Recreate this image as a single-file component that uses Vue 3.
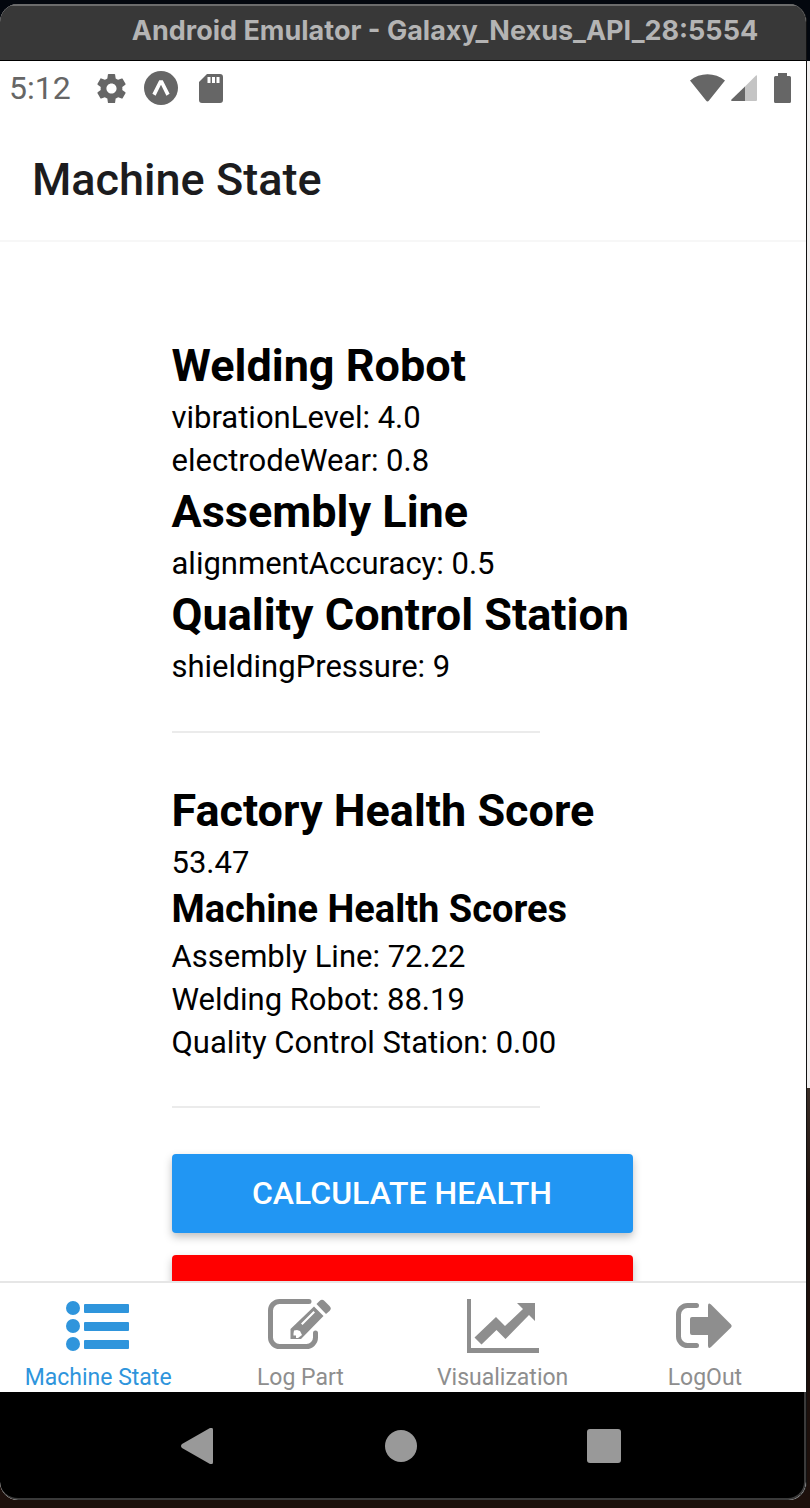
<script setup>
import { ref } from 'vue'

const machines = [
  { name: 'Welding Robot', readings: [['vibrationLevel', '4.0'], ['electrodeWear', '0.8']] },
  { name: 'Assembly Line', readings: [['alignmentAccuracy', '0.5']] },
  { name: 'Quality Control Station', readings: [['shieldingPressure', '9']] },
]

const factoryScore = '53.47'
const scores = [
  ['Assembly Line', '72.22'],
  ['Welding Robot', '88.19'],
  ['Quality Control Station', '0.00'],
]

const tabs = [
  { id: 'state', label: 'Machine State' },
  { id: 'log', label: 'Log Part' },
  { id: 'chart', label: 'Visualization' },
  { id: 'logout', label: 'LogOut' },
]
const active = ref('state')
</script>

<template>
  <div class="desktop">
    <div class="window">
      <div class="titlebar">Android Emulator - Galaxy_Nexus_API_28:5554</div>

      <div class="statusbar">
        <span class="clock">5:12</span>
        <svg class="status-icon gear" viewBox="2 2 20 20" aria-hidden="true">
          <path d="M19.43 12.98c.04-.32.07-.64.07-.98s-.03-.66-.07-.98l2.11-1.65c.19-.15.24-.42.12-.64l-2-3.46c-.12-.22-.39-.3-.61-.22l-2.49 1c-.52-.4-1.08-.73-1.69-.98l-.38-2.65C14.46 2.18 14.25 2 14 2h-4c-.25 0-.46.18-.49.42l-.38 2.65c-.61.25-1.17.59-1.69.98l-2.49-1c-.23-.09-.49 0-.61.22l-2 3.46c-.13.22-.07.49.12.64l2.11 1.65c-.04.32-.07.65-.07.98s.03.66.07.98l-2.11 1.65c-.19.15-.24.42-.12.64l2 3.46c.12.22.39.3.61.22l2.49-1c.52.4 1.08.73 1.69.98l.38 2.65c.03.24.24.42.49.42h4c.25 0 .46-.18.49-.42l.38-2.65c.61-.25 1.17-.59 1.69-.98l2.49 1c.23.09.49 0 .61-.22l2-3.46c.12-.22.07-.49-.12-.64l-2.11-1.65zM12 15.5c-1.93 0-3.5-1.57-3.5-3.5s1.57-3.5 3.500-3.5 3.500 1.57 3.500 3.500-1.57 3.500-3.500 3.500z" />
        </svg>
        <svg class="status-icon expo" viewBox="0 0 34 34" aria-hidden="true">
          <circle cx="17" cy="17" r="17" />
          <path fill="#fff" d="M15.2 9.2h3.6l6.8 13.6-3.2 1.9L17 13.8l-5.4 10.9-3.2-1.9z" />
        </svg>
        <svg class="status-icon card" viewBox="0 0 24 29" aria-hidden="true">
          <path fill-rule="evenodd" d="M8 0h13a3 3 0 0 1 3 3v23a3 3 0 0 1-3 3H3a3 3 0 0 1-3-3V8zM8.500 3v6h3V3zM13 3v6h3V3zM17.500 3v6h3V3z" />
        </svg>
        <span class="spacer"></span>
        <svg class="status-icon wifi" viewBox="0 0 35 28" aria-hidden="true">
          <path d="M0 6.500C10-2 25-2 35 6.500L19 26.500q-1.500 2-3 0z" />
        </svg>
        <svg class="status-icon signal" viewBox="0 0 26 26" aria-hidden="true">
          <path fill="#c4c4c4" d="M25 .5q1-.8 1 .5v24a1 1 0 0 1-1 1H14V11.500z" />
          <path d="M14 11.500V26H1q-1.500-.5-.5-1.500z" />
        </svg>
        <svg class="status-icon battery" viewBox="0 0 17 30" aria-hidden="true">
          <path d="M4 0h9v3h2.500A1.500 1.500 0 0 1 17 4.500v24a1.500 1.500 0 0 1-1.500 1.500h-14A1.500 1.500 0 0 1 0 28.500v-24A1.500 1.500 0 0 1 1.500 3H4z" />
        </svg>
      </div>

      <header class="appbar"><h1>Machine State</h1></header>

      <main class="scroll">
        <div class="content">
          <section v-for="m in machines" :key="m.name">
            <h2>{{ m.name }}</h2>
            <p v-for="r in m.readings" :key="r[0]">{{ r[0] }}: {{ r[1] }}</p>
          </section>
          <hr />
          <section>
            <h2>Factory Health Score</h2>
            <p>{{ factoryScore }}</p>
            <h3>Machine Health Scores</h3>
            <p v-for="s in scores" :key="s[0]">{{ s[0] }}: {{ s[1] }}</p>
          </section>
          <hr class="last" />
          <div class="actions">
            <button type="button" class="action primary">CALCULATE HEALTH</button>
            <button type="button" class="action danger" aria-label="Reset"></button>
          </div>
        </div>
      </main>

      <nav class="tabs">
        <button
          v-for="t in tabs"
          :key="t.id"
          type="button"
          class="tab"
          :class="{ active: active === t.id }"
          @click="active = t.id"
        >
          <svg v-if="t.id === 'state'" class="tab-icon" viewBox="0 0 76 56" aria-hidden="true">
            <circle cx="13" cy="9" r="7" /><circle cx="13" cy="27" r="7" /><circle cx="13" cy="45" r="7" />
            <rect x="24" y="5" width="45" height="9" rx="1" />
            <rect x="24" y="23" width="45" height="9" rx="1" />
            <rect x="24" y="41" width="45" height="9" rx="1" />
          </svg>
          <svg v-else-if="t.id === 'log'" class="tab-icon" viewBox="0 0 76 56" aria-hidden="true">
            <path class="line" d="M47 2.500H17.500a9 9 0 0 0-9 9v27a9 9 0 0 0 9 9h27a9 9 0 0 0 9-9V34" />
            <path fill-rule="evenodd" d="M52 7.500 61.500 17 39 40H28.500V30zM32 31.500l-.5 3v2H34V39h2l4-3-2-4-3-1zM51.500 12 39 24.500l1.500 1.500L53 13.500z" />
            <path d="M54.500 5 57.500 2q2.500-2.500 5 0l5 5q2.500 2.500 0 5L64 15z" />
          </svg>
          <svg v-else-if="t.id === 'chart'" class="tab-icon" viewBox="0 0 76 56" aria-hidden="true">
            <path d="M2 0h4v49h68v5H2zM52 4h18v18l-6-6-23.500 24-9-9-15 14.500-7-7L31 18l9 9L58 10z" />
          </svg>
          <svg v-else class="tab-icon" viewBox="0 0 76 56" aria-hidden="true">
            <path class="line" d="M29.500 6.500H20.500a9 9 0 0 0-9 9v22a9 9 0 0 0 9 9h9" />
            <path d="M25 18h16V7q0-4 3-1.500l20 20q1.500 1.500 0 3l-20 19.500q-3 2.500-3-1.500V36H25q-2 0-2-2V20q0-2 2-2z" />
          </svg>
          <span>{{ t.label }}</span>
        </button>
      </nav>

      <div class="softkeys">
        <button type="button" aria-label="Back">
          <svg viewBox="0 0 36 36"><path d="M1 16 29 0q3-1 3 2v32q0 3-3 2L1 20q-2-2 0-4z" /></svg>
        </button>
        <button type="button" aria-label="Home">
          <svg viewBox="0 0 36 36"><circle cx="18" cy="18" r="16" /></svg>
        </button>
        <button type="button" aria-label="Overview">
          <svg viewBox="0 0 36 36"><rect x="1" y="1" width="34" height="34" rx="3" /></svg>
        </button>
      </div>
    </div>
  </div>
</template>

<style>
body {
  margin: 0;
  background: #1d100c;
}
</style>

<style scoped>
.desktop {
  box-sizing: border-box;
  height: 100vh;
  padding: 4px 3px 8px 0;
  background: linear-gradient(#03070e 61px, #f0eeee 61px, #f0eeee 1088px, #3b2f28 1088px, #1d100c 1200px);
  font-family: Roboto, "Liberation Sans", sans-serif;
  color: #000;
}
.window {
  box-sizing: border-box;
  height: 100%;
  display: flex;
  flex-direction: column;
  overflow: hidden;
  border-right: 1px solid #111;
  border-radius: 18px;
  background: #fff;
}
.titlebar {
  box-sizing: border-box;
  flex: none;
  height: 57px;
  padding-left: 84px;
  border-top: 2px solid #6c6c6c;
  border-bottom: 1px solid #000;
  background: #383838;
  color: #b4b4b4;
  font: 700 27px/50px Inter, "Liberation Sans", sans-serif;
  text-align: center;
  white-space: nowrap;
}
.statusbar {
  flex: none;
  height: 54px;
  padding: 0 15px 0 9px;
  display: flex;
  align-items: center;
  color: #666;
}
.clock {
  font-size: 32px;
  line-height: 54px;
}
.status-icon {
  display: block;
  flex: none;
  fill: #666;
}
.gear { width: 29px; height: 29px; margin-left: 26px; }
.expo { width: 34px; height: 34px; margin-left: 18px; }
.card { width: 24px; height: 29px; margin-left: 21px; }
.spacer { flex: 1; }
.wifi { width: 35px; height: 28px; }
.signal { width: 26px; height: 26px; margin-left: 6px; }
.battery { width: 17px; height: 30px; margin-left: 17px; }
.appbar {
  flex: none;
  height: 125px;
  padding-left: 32px;
  border-bottom: 2px solid #f7f7f7;
}
.appbar h1 {
  margin: 0;
  font-size: 45px;
  font-weight: 500;
  line-height: 130px;
  color: #1c1c1e;
}
.scroll {
  flex: 1;
  min-height: 0;
  overflow-y: auto;
  scrollbar-width: none;
}
.content {
  width: fit-content;
  min-width: 461px;
  margin: 0 auto;
  padding: 94px 2px 94px 0;
}
h2, h3, p { margin: 0; }
h2 { font-size: 45px; line-height: 60px; }
h3 { font-size: 38px; line-height: 51px; }
p { font-size: 31px; line-height: 43px; }
hr {
  width: 80%;
  height: 2px;
  margin: 43px 0 48px;
  border: 0;
  background: #ebebeb;
}
hr.last { margin: 42px 0 46px; }
.actions {
  display: flex;
  flex-direction: column;
  gap: 22px;
}
.action {
  height: 79px;
  padding: 0;
  border: 0;
  border-radius: 4px;
  color: #fff;
  font: 500 32px/79px Roboto, "Liberation Sans", sans-serif;
  box-shadow: 0 4px 8px rgba(0, 0, 0, 0.25);
}
.primary { background: #2196f3; }
.danger { background: #f00; }
.tabs {
  flex: none;
  display: flex;
  margin-left: -3px;
  padding-top: 16px;
  border-top: 2px solid #e6e6e6;
  background: #fff;
}
.tab {
  flex: 1 1 0;
  display: flex;
  flex-direction: column;
  align-items: center;
  gap: 9px;
  padding: 0;
  border: 0;
  background: none;
  color: #8e8e8e;
  font: 400 23px/28px Roboto, "Liberation Sans", sans-serif;
}
.tab.active { color: #2f95dc; }
.tab-icon {
  width: 76px;
  height: 56px;
  fill: currentColor;
}
.tab-icon .line {
  fill: none;
  stroke: currentColor;
  stroke-width: 5;
  stroke-linecap: round;
}
.softkeys {
  box-sizing: border-box;
  flex: none;
  height: 108px;
  display: flex;
  justify-content: center;
  gap: 2px;
  padding: 2px 2px 0 0;
  border-right: 2px solid #3a3a3a;
  border-bottom: 2px solid #3a3a3a;
  border-radius: 0 0 18px 18px;
  background: #000;
}
.softkeys button {
  width: 25%;
  padding: 0;
  border: 0;
  background: none;
}
.softkeys svg {
  display: block;
  width: 36px;
  height: 36px;
  margin: 0 auto;
  fill: #999;
}
</style>
